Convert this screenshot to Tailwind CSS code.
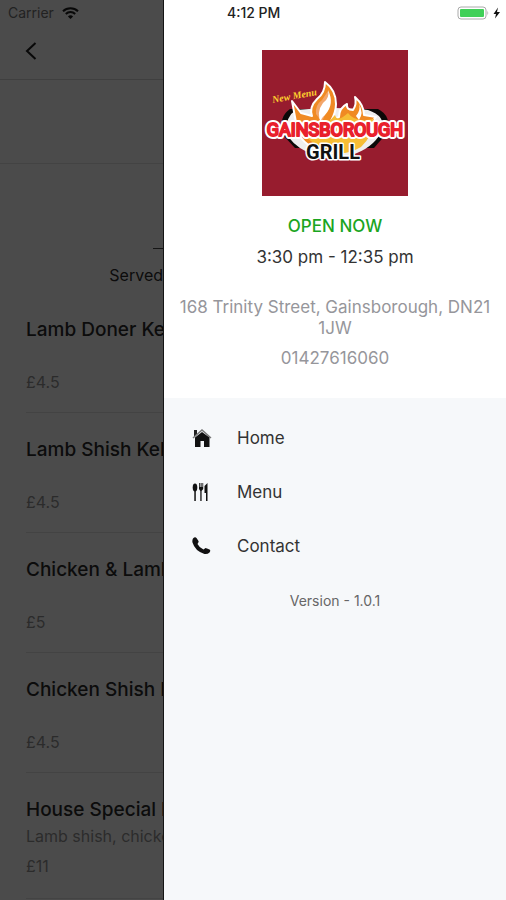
<!DOCTYPE html>
<html lang="en">
<head>
    <meta charset="UTF-8">
    <meta name="viewport" content="width=device-width, initial-scale=1.0">
    <title>Gainsborough Grill</title>
    <script src="https://cdn.jsdelivr.net/npm/@tailwindcss/browser@4"></script>
</head>
<body class="flex h-screen overflow-hidden bg-[#4b4b4b] font-['Inter','Liberation_Sans',sans-serif]">
    <!-- Menu page, dimmed behind the drawer -->
    <main class="w-[164px] shrink-0 overflow-hidden whitespace-nowrap border-r border-[#151515] bg-[#4b4b4b] text-[#0c0c0c]">
        <header class="border-b border-[#3f3f3f]">
            <div class="flex h-[26px] items-center gap-2 pl-2 text-sm text-[#222]">
                <span>Carrier</span>
                <svg class="h-3 w-[17px]" viewBox="0 0 17 12" fill="none" stroke="#080808" stroke-width="2">
                    <path d="M1 4.2a10.8 10.8 0 0 1 15 0M3.8 7a6.8 6.8 0 0 1 9.4 0"/>
                    <path d="M8.5 12 5.9 9.4a3.8 3.8 0 0 1 5.2 0z" fill="#080808" stroke="none"/>
                </svg>
            </div>
            <div class="flex h-[53px] items-center px-[25px]">
                <button type="button" aria-label="Back" class="mb-1">
                    <svg class="h-[18px] w-3" viewBox="0 0 12 18" fill="none" stroke="#080808" stroke-width="2">
                        <path d="M10.5 1 2 9l8.5 8"/>
                    </svg>
                </button>
            </div>
        </header>
        <div class="h-[84px] border-b border-[#434343]"></div>
        <div class="flex h-[136px] flex-col items-end pt-[84px]">
            <div class="h-px w-[10px] bg-[#151515]"></div>
            <p class="mt-[14px] text-base">Served</p>
        </div>
        <ul class="pl-[26px]">
            <li class="flex h-[113px] flex-col border-b border-[#434343] pt-[18px]">
                <h2 class="text-[19px] leading-6 font-medium">Lamb Doner Kebab</h2>
                <p class="mt-auto pb-[18px] text-base text-[#2b2b2b]">£4.5</p>
            </li>
            <li class="flex h-[120px] flex-col border-b border-[#434343] pt-[25px]">
                <h2 class="text-[19px] leading-6 font-medium">Lamb Shish Kebab</h2>
                <p class="mt-auto pb-[18px] text-base text-[#2b2b2b]">£4.5</p>
            </li>
            <li class="flex h-[120px] flex-col border-b border-[#434343] pt-[25px]">
                <h2 class="text-[19px] leading-6 font-medium">Chicken &amp; Lamb</h2>
                <p class="mt-auto pb-[18px] text-base text-[#2b2b2b]">£5</p>
            </li>
            <li class="flex h-[120px] flex-col border-b border-[#434343] pt-[25px]">
                <h2 class="text-[19px] leading-6 font-medium">Chicken Shish Kebab</h2>
                <p class="mt-auto pb-[18px] text-base text-[#2b2b2b]">£4.5</p>
            </li>
            <li class="flex h-[126px] flex-col border-b border-[#434343] pt-[25px]">
                <h2 class="text-[19px] leading-6 font-medium">House Special Kebab</h2>
                <p class="mt-[2px] text-base leading-6 text-[#2b2b2b]">Lamb shish, chicken</p>
                <p class="mt-[6px] text-base text-[#2b2b2b]">£11</p>
            </li>
        </ul>
    </main>

    <!-- Drawer -->
    <aside class="flex min-w-0 flex-1 flex-col bg-[#f6f8fa]">
        <section class="flex flex-col items-center bg-white pb-[29px] text-center">
            <div class="flex h-[26px] w-full items-center justify-between pr-[5px] pl-[63px] text-sm font-medium text-[#222]">
                <span>4:12 PM</span>
                <svg class="h-[14px] w-[44px]" viewBox="0 0 44 14">
                    <rect x="1" y="1" width="28" height="12" rx="3" fill="#fff" stroke="#aaa"/>
                    <rect x="3" y="3" width="24" height="8" rx="1" fill="#40d058"/>
                    <path d="M30.5 4.5q1.5 2.5 0 5z" fill="#999"/>
                    <path d="M41 1.5 36.5 8H39l-1 4.5L43 6h-3z" fill="#111"/>
                </svg>
            </div>
            <svg class="mt-6 h-[146px] w-[146px]" viewBox="0 0 146 146" role="img" aria-label="Gainsborough Grill">
                <rect width="146" height="146" fill="#971c2e"/>
                <path d="M28 59h88q14 7 9 24l-13 15H33L20 84q-3-18 8-25z" fill="#0b0908"/>
                <path d="M34 60q40-4 72 0 18 6 14 20-6 15-25 23-27 12-50-1-16-8-21-20 0-16 10-22z" fill="#eee"/>
                <path d="M30 51l9 12 11 3q-3-9 5-17 8-6 8-17 11 8 11 22 0 8-5 17l8-4q0-9 8-13-1 6 6 6 4-6 2-13 9 8 9 18l12 2q-9 9-9 20-12 15-31 16-28-1-38-20z" fill="#f08a23" stroke="#fff" stroke-width="2" stroke-linejoin="round"/>
                <path d="M54 64q-1-9 6-14l6-9q5 11-2 21l-4 10z" fill="#f3a66a"/>
                <path d="M38 80q21 2 35-15 2 8 13-2 7 10 26 6-1 17-13 28-24 14-46-3-10-7-15-14z" fill="#f6bd35"/>
                <path d="M61 53q7-5 5-13 7 14-3 25-5 4-4 8-5-11 2-20zM94 66q5-6 3-12 5 9 0 16z" fill="#fff"/>
                <g font-weight="700" stroke-linejoin="round" text-anchor="middle">
                    <text x="33" y="49" transform="rotate(-10 33 49)" font-family="Liberation Serif, serif" font-size="10" font-style="italic" fill="#ffd22e">New Menu</text>
                    <text x="73" y="86" paint-order="stroke" font-family="Roboto, Liberation Sans, sans-serif" font-size="18" font-weight="400" fill="#e9202c" stroke="#fff" stroke-width="6" aria-hidden="true">GAINSBOROUGH</text>
                    <text x="73" y="86" font-family="Roboto, Liberation Sans, sans-serif" font-size="18" font-weight="400" fill="#e9202c" stroke="#e9202c" stroke-width="2">GAINSBOROUGH</text>
                    <text x="71" y="109" paint-order="stroke" font-family="Roboto, Liberation Sans, sans-serif" font-size="20" fill="#111" stroke="#fff" stroke-width="3">GRILL</text>
                </g>
            </svg>
            <p class="mt-[18px] text-[17px] leading-6 font-medium text-[#1ba51f]">OPEN NOW</p>
            <p class="mt-[7px] text-[17px] leading-6 text-[#333]">3:30 pm - 12:35 pm</p>
            <address class="mt-7 px-3 text-[17px] leading-[21px] text-[#96969b] not-italic">
                168 Trinity Street, Gainsborough, DN21 1JW
                <a href="tel:01427616060" class="mt-[9px] block">01427616060</a>
            </address>
        </section>
        <nav class="flex flex-col pt-[14px] text-[17px] text-[#333]">
            <a href="#home" class="flex h-[54px] items-center gap-[25px] pl-7">
                <svg class="h-5 w-5" viewBox="0 0 20 20">
                    <path d="M2 1h3v4l-3 3z" fill="#222"/>
                    <path d="M1 9 10 1l9 8" fill="none" stroke="#777" stroke-width="1.5"/>
                    <path d="M3 8.5 10 3l7.5 5.5V18H12v-6H8.5v6H3z" fill="#111"/>
                </svg>
                Home
            </a>
            <a href="#menu" class="flex h-[54px] items-center gap-[25px] pl-7">
                <svg class="h-5 w-5" viewBox="0 0 20 20" fill="#111">
                    <ellipse cx="3" cy="4.5" rx="2.3" ry="4"/>
                    <path d="M2.3 7h1.5v11H2.3zM7 0h.8v4h.8V0h1v4h.8V0h.8v6L9.600 8v10H8.300V8L7 6zM15.500 0v18H14v-8h-1.500V3z"/>
                </svg>
                Menu
            </a>
            <a href="#contact" class="flex h-[54px] items-center gap-[25px] pl-7">
                <svg class="h-5 w-5" viewBox="0 0 20 20" fill="#111">
                    <path d="M1 1.500Q3-.5 4.500 1L6.500 4q.5 1-1 3 2 4 6 5.500l2-1.500q1 0 4 1.500 1.500 1 0 3-2 2-5 1.500Q3 14 .5 5.500q-.5-2 .5-4z"/>
                </svg>
                Contact
            </a>
        </nav>
        <p class="mt-[17px] text-center text-sm text-[#666]">Version - 1.0.1</p>
    </aside>
</body>
</html>
